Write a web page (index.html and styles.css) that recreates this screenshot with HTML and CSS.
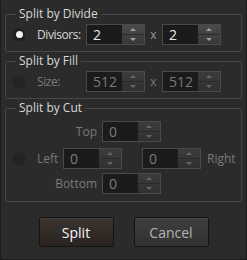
FILE: index.html
```html
<!DOCTYPE html>
<html lang="en">
<head>
 <meta charset="UTF-8">
 <title>Split</title>
 <link rel="stylesheet" href="styles.css">
</head>
<body>
 <div class="dialog">
  <fieldset class="group">
   <legend>Split by Divide</legend>
   <div class="row">
    <span class="radio checked"></span>
    <span class="label">Divisors:</span>
    <div class="spin"><span class="val">2</span><span class="btns"><i class="up"></i><i class="down"></i></span></div>
    <span class="times">x</span>
    <div class="spin"><span class="val">2</span><span class="btns"><i class="up"></i><i class="down"></i></span></div>
   </div>
  </fieldset>

  <fieldset class="group off">
   <legend>Split by Fill</legend>
   <div class="row">
    <span class="radio"></span>
    <span class="label">Size:</span>
    <div class="spin"><span class="val">512</span><span class="btns"><i class="up"></i><i class="down"></i></span></div>
    <span class="times">x</span>
    <div class="spin"><span class="val">512</span><span class="btns"><i class="up"></i><i class="down"></i></span></div>
   </div>
  </fieldset>

  <fieldset class="group off cut">
   <legend>Split by Cut</legend>
   <div class="cut-row top">
    <span class="side">Top</span>
    <div class="spin"><span class="val">0</span><span class="btns"><i class="up"></i><i class="down"></i></span></div>
   </div>
   <div class="cut-row mid">
    <span class="radio"></span>
    <span class="side">Left</span>
    <div class="spin"><span class="val">0</span><span class="btns"><i class="up"></i><i class="down"></i></span></div>
    <div class="spin right-spin"><span class="val">0</span><span class="btns"><i class="up"></i><i class="down"></i></span></div>
    <span class="side">Right</span>
   </div>
   <div class="cut-row bottom">
    <span class="side">Bottom</span>
    <div class="spin"><span class="val">0</span><span class="btns"><i class="up"></i><i class="down"></i></span></div>
   </div>
  </fieldset>

  <div class="actions">
   <button class="btn primary">Split</button>
   <button class="btn">Cancel</button>
  </div>
 </div>
</body>
</html>
```

FILE: styles.css
```css
body {
 margin: 0;
 background: #2b2b2b;
 font-family: "Open Sans", "Noto Sans", sans-serif;
 font-size: 12px;
 color: #d8d8d8;
}
.dialog {
 width: 247px;
 height: 260px;
 box-sizing: border-box;
 padding: 6px 4px 0 4px;
 border: 1px solid #1c1c1c;
 border-top: none;
}
.group {
 margin: 0 0 1px 0;
 padding: 2px 0 6px 6px;
 border: 1px solid #464646;
 border-radius: 2px;
}
.group legend {
 padding: 0 3px;
 margin-left: 4px;
 line-height: 16px;
 color: #d8d8d8;
}
.row {
 display: flex;
 align-items: center;
 height: 21px;
}
.radio {
 width: 14px;
 height: 14px;
 border-radius: 50%;
 background: #1f1f1f;
 box-sizing: border-box;
 border: 1px solid #262626;
 display: flex;
 align-items: center;
 justify-content: center;
}
.radio.checked::after {
 content: "";
 width: 7px;
 height: 7px;
 border-radius: 50%;
 background: #f2f2f2;
}
.label {
 margin-left: 11px;
 width: 49px;
 letter-spacing: -0.4px;
}
.spin {
 display: flex;
 width: 59px;
 height: 21px;
 box-sizing: border-box;
 border: 1px solid #4a4a4a;
 background: #1b1b1b;
}
.val {
 flex: 1;
 padding-left: 6px;
 font-size: 14px;
 line-height: 19px;
 color: #e8e8e8;
}
.btns {
 width: 22px;
 display: flex;
 flex-direction: column;
 background: linear-gradient(#4a4a4a, #383838);
}
.btns i {
 flex: 1;
 display: flex;
 align-items: center;
 justify-content: center;
}
.btns .up {
 border-bottom: 1px solid #2a2a2a;
}
.btns .up::after {
 content: "";
 border: 3px solid transparent;
 border-bottom: 3px solid #a0a0a0;
 border-top: none;
}
.btns .down::after {
 content: "";
 border: 3px solid transparent;
 border-top: 3px solid #a0a0a0;
 border-bottom: none;
}
.times {
 width: 17px;
 text-align: center;
 color: #999;
}
.off .label,
.off .side,
.off .times,
.off .val {
 color: #7a7a7a;
}
.off .radio {
 background: #242424;
 border-color: #272727;
}
.off .btns {
 background: linear-gradient(#3c3c3c, #303030);
}
.off .btns i::after {
 border-bottom-color: #666;
 border-top-color: #666;
}
.cut {
 padding-bottom: 7px;
}
.cut-row {
 display: flex;
 align-items: center;
 height: 21px;
}
.cut-row.top {
 margin-top: 3px;
 padding-left: 61px;
}
.cut-row.top .side,
.cut-row.bottom .side {
 box-sizing: border-box;
 padding-right: 5px;
 text-align: right;
}
.cut-row.top .side {
 width: 29px;
}
.cut-row.mid {
 margin-top: 6px;
}
.cut-row.mid .side {
 margin-left: 11px;
 width: 26px;
}
.cut-row.mid .right-spin {
 margin-left: 20px;
}
.cut-row.mid .right-spin + .side {
 margin-left: 6px;
}
.cut-row.bottom {
 margin-top: 4px;
 padding-left: 38px;
}
.cut-row.bottom .side {
 width: 52px;
}
.actions {
 display: flex;
 justify-content: center;
 gap: 20px;
 margin-top: 15px;
}
.btn {
 width: 75px;
 height: 30px;
 font-family: inherit;
 font-size: 14px;
 border: 1px solid #141414;
 border-radius: 2px;
 color: #b4b4b4;
 background: linear-gradient(#3e3e3e, #323232);
 box-shadow: inset 0 1px 0 #4a4a4a;
}
.btn.primary {
 color: #f4f4f4;
 background: linear-gradient(#3a332e, #2a2420);
 box-shadow: inset 0 1px 0 #46403a;
}
```
